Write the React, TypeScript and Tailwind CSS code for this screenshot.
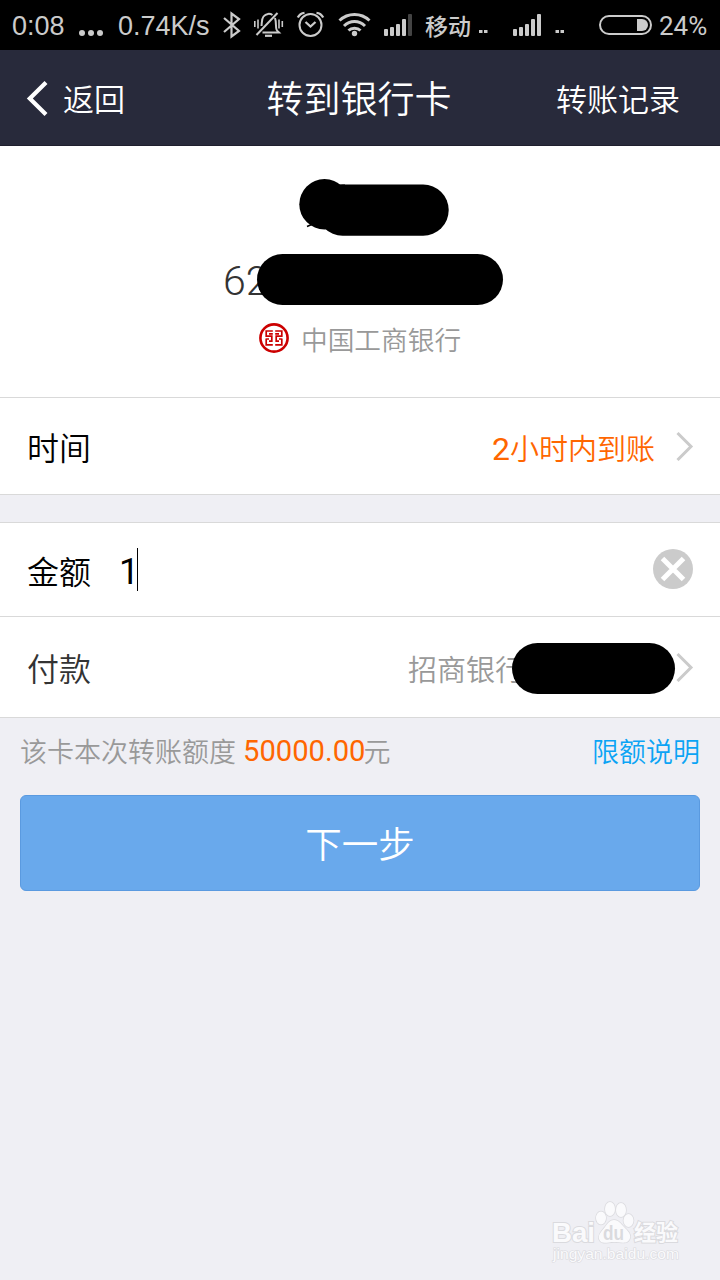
import React from "react";

function StatusBar() {
  return (
    <div className="flex h-[50px] items-center bg-black pl-3 font-['Roboto','Noto_Sans_CJK_SC',sans-serif] font-normal text-[#cbcbcb]">
      <span className="w-[66px] shrink-0 whitespace-nowrap pt-0.5 font-['Liberation_Sans',sans-serif] text-[27px] leading-[50px]">0:08</span>
      <svg className="h-[50px] w-[26px] shrink-0" viewBox="78 0 26 50" fill="#cbcbcb">
        <circle cx="82" cy="33" r="3" />
        <circle cx="91" cy="33" r="3" />
        <circle cx="100" cy="33" r="3" />
      </svg>
      <span className="ml-[14px] w-[98px] shrink-0 whitespace-nowrap pt-0.5 font-['Liberation_Sans',sans-serif] text-[27px] leading-[50px]">0.74K/s</span>
      <svg className="h-[50px] w-[200px] shrink-0" viewBox="216 0 200 50" fill="none" stroke="#cbcbcb" strokeWidth="2">
        <path d="M224 18 239 31 231.500 36.500V13.500L239 19 224 32" strokeWidth="2.200" />
        <path d="M256.500 35 277.500 13" />
        <path d="M261.500 26C262 22 261.500 19 263.500 16.500C266 13.300 270 13.300 272.500 15M275 18C276.500 22 275.500 27 276.500 29.500C277 31 278 31.500 279 32.500H262.500" />
        <path d="M265 35.800h7" strokeWidth="2.200" />
        <path d="M254.800 21v6M258 19.500v9M279 19.500v9M282.300 21v6" strokeWidth="1.600" />
        <circle cx="310.500" cy="25" r="11" />
        <path d="m305.500 22 5 4.500 5-4.500M297.800 17.500C298.800 15.500 301.500 13 304.500 12.800M316.500 12.800C319.500 13 322.200 15.500 323.200 17.500" strokeWidth="2.300" />
        <path d="M339.500 20.500C348 12.500 361 12.500 369.500 20.500M344 26C350 20 359 20 365 26M348.500 30.500C351.500 27.500 357.500 27.500 360.500 30.500" strokeWidth="3" />
        <g stroke="none" fill="#cbcbcb">
          <circle cx="354.500" cy="33.500" r="2.700" />
          <rect x="384" y="29" width="4" height="7" rx="1" />
          <rect x="390" y="27" width="4" height="9" rx="1" />
          <rect x="396" y="24" width="4" height="12" rx="1" />
          <rect x="402" y="19" width="4" height="17" rx="1" />
          <rect x="408" y="14" width="4" height="22" rx="1" fill="#444" />
        </g>
      </svg>
      <span className="ml-[9px] w-[46px] shrink-0 whitespace-nowrap font-['Noto_Sans_CJK_SC',sans-serif] text-[23px] font-medium leading-[48px]">移动</span>
      <svg className="h-[50px] w-[186px] shrink-0" viewBox="471 0 186 50" fill="#cbcbcb">
        <rect x="479" y="30" width="3.500" height="3" />
        <rect x="484" y="30" width="3.500" height="3" />
        <rect x="513" y="29" width="4" height="7" rx="1" />
        <rect x="519" y="27" width="4" height="9" rx="1" />
        <rect x="525" y="24" width="4" height="12" rx="1" />
        <rect x="531" y="19" width="4" height="17" rx="1" />
        <rect x="537" y="14" width="4" height="22" rx="1" />
        <rect x="555.500" y="30" width="3.500" height="3" />
        <rect x="560.500" y="30" width="3.500" height="3" />
        <rect x="600" y="16" width="51" height="18" rx="9" fill="none" stroke="#cbcbcb" strokeWidth="2" />
        <path d="M637 19h5a6 6 0 0 1 0 12h-5z" />
      </svg>
      <span className="ml-[2px] whitespace-nowrap pt-0.5 text-[26px] leading-[50px]">24%</span>
    </div>
  );
}

function Chevron() {
  return (
    <svg className="h-[30px] w-[20px] shrink-0" viewBox="0 0 20 30" fill="none" stroke="#cbcbcb" strokeWidth="3">
      <path d="M2.500 2 16 15.500 2.500 29" />
    </svg>
  );
}

function BankLogo() {
  return (
    <svg className="h-[30px] w-[30px]" viewBox="0 0 30 30" fill="none" stroke="#cc0000">
      <circle cx="15" cy="15" r="13.600" strokeWidth="2.600" />
      <path d="M13.800 8H7.200V13.200H12.800V18.200H10M13.800 10.800H10M7.200 15.500V21.800H13.800M16.200 8H22.800V13.200H17.200V18.200H20M16.200 10.800H20M22.800 15.500V21.800H16.200M7.200 16H10M22.800 16H20" strokeWidth="1.700" />
    </svg>
  );
}

function Watermark() {
  return (
    <div className="mt-auto flex h-[80px] justify-end pr-[35px]">
      <svg className="h-[70px] w-[135px]" viewBox="550 1200 135 70" fill="#fafafc" stroke="#dadade" strokeWidth="2" paintOrder="stroke">
        <text x="552" y="1242" textLength="43" lengthAdjust="spacingAndGlyphs" className="font-['Liberation_Sans',sans-serif] text-[28px] font-bold">Bai</text>
        <ellipse cx="601" cy="1218" rx="5" ry="6.500" strokeWidth="1.500" />
        <ellipse cx="610" cy="1209" rx="5" ry="7" strokeWidth="1.500" />
        <ellipse cx="621" cy="1210" rx="5" ry="7" strokeWidth="1.500" />
        <ellipse cx="628.500" cy="1220.500" rx="5" ry="6.500" strokeWidth="1.500" />
        <path d="M614 1220c5 0 7 4 10 7c4 4 7 7 6 11c-2 7-9 4-16 4s-13 3-15-3c-1-5 3-8 6-12c3-4 5-7 9-7z" strokeWidth="1.500" />
        <text x="603" y="1240" fill="#dadade" stroke="none" textLength="21" lengthAdjust="spacingAndGlyphs" className="font-['Liberation_Sans',sans-serif] text-[20px] font-bold">du</text>
        <text x="634" y="1240" textLength="44" className="font-['Noto_Sans_CJK_SC',sans-serif] text-[22px] font-bold">经验</text>
        <text x="553" y="1259" strokeWidth="1.200" textLength="126" lengthAdjust="spacingAndGlyphs" className="font-['Liberation_Sans',sans-serif] text-[14px]">jingyan.baidu.com</text>
      </svg>
    </div>
  );
}

export default function App() {
  return (
    <div className="flex h-[1280px] w-[720px] flex-col overflow-hidden bg-[#efeff4] font-['Noto_Sans_CJK_SC',sans-serif] font-[350] text-black">
      <StatusBar />
      <header className="grid h-24 shrink-0 grid-cols-[240px_240px_240px] items-center border-b border-[#1f1f2e] bg-[#282a3b] text-white">
        <div className="flex items-center pl-[26px]">
          <svg className="h-[36px] w-[24px]" viewBox="0 0 24 36" fill="none" stroke="currentColor" strokeWidth="4.200">
            <path d="M20 2.500 3.800 18.500 20 34.500" />
          </svg>
          <span className="ml-[13px] text-[31px] leading-[48px]">返回</span>
        </div>
        <h1 className="whitespace-nowrap pb-0.5 pr-0.5 text-center text-[37px] leading-[48px]">转到银行卡</h1>
        <span className="justify-self-end whitespace-nowrap pr-10 text-[31px] leading-[48px]">转账记录</span>
      </header>

      <section className="flex h-[252px] shrink-0 flex-col border-b border-[#d9d9d9] bg-white pt-[33px]">
        <svg className="ml-[299px] h-[58px] w-[151px]" viewBox="299 179 151 58">
          <path d="m307 226.500 7-3" stroke="black" strokeWidth="1.500" />
          <rect x="317" y="184.500" width="131.700" height="51.200" rx="25.600" />
          <path d="M330 184.500h15v20h-15z" />
          <circle cx="324.500" cy="204.300" r="25.200" />
        </svg>
        <div className="ml-[223px] mt-[17px] flex h-[51px] items-center">
          <span className="w-[34px] shrink-0 whitespace-nowrap pt-0.5 font-['Roboto',sans-serif] text-[41px] leading-[52px] text-[#333]">62</span>
          <span className="relative h-[51px] w-[246px] rounded-full bg-black" />
        </div>
        <div className="ml-[259px] mt-[15px] flex h-[36px] items-center">
          <BankLogo />
          <span className="ml-3 whitespace-nowrap pt-0.5 text-[26.700px] leading-[36px] text-[#999]">中国工商银行</span>
        </div>
      </section>

      <section className="flex h-[97px] shrink-0 items-center border-b border-[#d9d9d9] bg-white pl-[27px] pr-[25px]">
        <span className="text-[32px] leading-[48px]">时间</span>
        <span className="ml-auto mr-5 flex items-center whitespace-nowrap pt-0.5 text-[29px] leading-[48px] text-[#ff6600]">
          <span className="w-[18px] pt-1 font-['Roboto',sans-serif] text-[32px] font-normal">2</span>小时内到账
        </span>
        <Chevron />
      </section>

      <section className="mt-[27px] shrink-0 border-y border-[#d9d9d9] bg-white">
        <div className="flex h-[94px] items-center border-b border-[#d9d9d9] pl-[27px] pr-[27px]">
          <span className="text-[32px] leading-[48px]">金额</span>
          <span className="ml-[28px] w-[18px] pt-[5px] font-['Roboto',sans-serif] text-[36px] font-normal leading-[48px]">1</span>
          <span className="h-[43px] w-px bg-black" />
          <svg className="mb-0.5 ml-auto h-10 w-10" viewBox="0 0 40 40">
            <circle cx="20" cy="20" r="20" fill="#cbcbcb" />
            <path d="m9.500 9.500 21 21m0-21-21 21" stroke="white" strokeWidth="5" />
          </svg>
        </div>
        <div className="flex h-[100px] items-center pl-[27px] pr-[25px]">
          <span className="text-[32px] leading-[48px] text-[#333]">付款</span>
          <span className="ml-auto w-[104px] whitespace-nowrap pt-0.5 text-[29px] leading-[48px] text-[#999]">招商银行</span>
          <span className="relative mt-[3px] h-[51px] w-[163px] rounded-full bg-black" />
          <Chevron />
        </div>
      </section>

      <div className="flex h-[77px] shrink-0 items-center px-5 pb-[11px] text-[27px] leading-[40px] text-[#999]">
        <span className="whitespace-nowrap">该卡本次转账额度</span>
        <span className="ml-[7px] w-[120.500px] whitespace-nowrap font-['Roboto',sans-serif] text-[29.200px] font-normal text-[#ff6600]">50000.00</span>
        <span>元</span>
        <a className="ml-auto text-[#0ba4f5]">限额说明</a>
      </div>
      <button className="mx-5 h-24 shrink-0 rounded-[6px] border border-[#5a9ae0] bg-[#69a9ec] text-[36.500px] leading-[48px] text-white">下一步</button>
      <Watermark />
    </div>
  );
}
